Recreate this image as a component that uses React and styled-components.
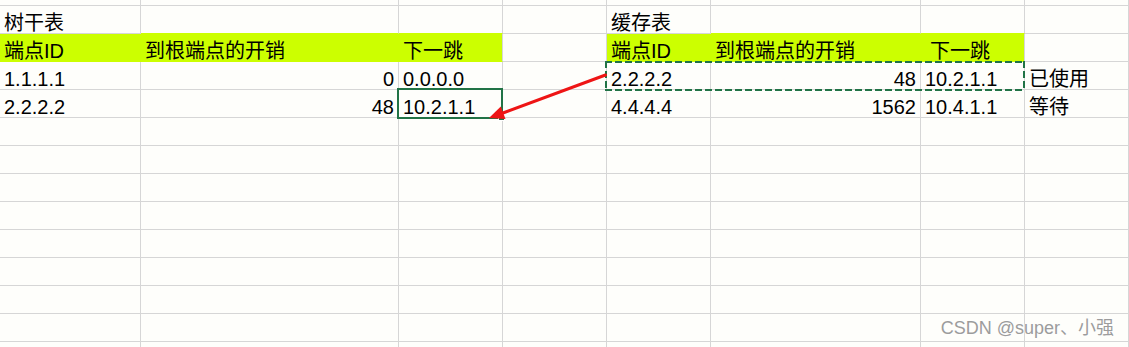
import React from 'react';
import styled, { createGlobalStyle } from 'styled-components';

const GRID = '#d6d6d6';
const LIME = '#ccff00';
const EXCEL = '#217346';
const PAPER = '#fefefb';

const GlobalStyle = createGlobalStyle`
  html, body {
    margin: 0;
    padding: 0;
    background: ${PAPER};
  }
  body {
    font-family: "Liberation Sans", "Noto Sans CJK SC", sans-serif;
  }
`;

// rows of the sheet, 8 columns each (A..H)
// a cell is text, or {t, right, fill, end, indent, above}
const rows = [
  null,
  ['树干表', { t: '', above: 1 }, { t: '', above: 1 }, '', '缓存表', { t: '', above: 1 }, { t: '', above: 1 }, ''],
  [
    { t: '端点ID', fill: 1 },
    { t: '到根端点的开销', fill: 1 },
    { t: '下一跳', fill: 1, end: 1 },
    '',
    { t: '端点ID', fill: 1 },
    { t: '到根端点的开销', fill: 1 },
    { t: '下一跳', fill: 1, end: 1, indent: 5 },
    '',
  ],
  ['1.1.1.1', { t: '0', right: 1 }, '0.0.0.0', '', '2.2.2.2', { t: '48', right: 1 }, '10.2.1.1', '已使用'],
  ['2.2.2.2', { t: '48', right: 1 }, '10.2.1.1', '', '4.4.4.4', { t: '1562', right: 1 }, '10.4.1.1', '等待'],
];

const TOTAL_ROWS = 14;

const Page = styled.div`
  position: relative;
  width: 1129px;
  height: 347px;
  overflow: hidden;
  background: ${PAPER};
`;

const Sheet = styled.div`
  display: grid;
  grid-template-columns: 141px 258px 104px 104px 104px 210px 104px 104px;
  grid-template-rows: 6px repeat(13, 28px);
`;

const Cell = styled.div`
  grid-row: ${p => p.$r};
  grid-column: ${p => p.$c};
  display: flex;
  align-items: flex-end;
  justify-content: ${p => (p.$right ? 'flex-end' : 'flex-start')};
  padding: 0 4px 0 ${p => 4 + (p.$indent || 0)}px;
  box-sizing: border-box;
  min-width: 0;
  border-right: 1px solid ${p => (p.$fill && !p.$end ? LIME : GRID)};
  border-bottom: 1px solid ${p => (p.$fill || p.$above ? LIME : GRID)};
  background: ${p => (p.$fill ? LIME : 'transparent')};
  color: #000;
  font-size: 20px;
  line-height: 20px;
  white-space: nowrap;
  overflow: hidden;
`;

const dash = dir => `repeating-linear-gradient(${dir}, ${EXCEL} 0 7px, transparent 7px 10px)`;

const CopyMarquee = styled.div`
  grid-row: 4;
  grid-column: 5 / 8;
  margin: -1px 0 -1px -2px;
  pointer-events: none;
  background:
    ${dash('90deg')} top left / 100% 2px no-repeat,
    ${dash('90deg')} bottom left / 100% 2px no-repeat,
    ${dash('180deg')} top left / 2px 100% no-repeat,
    ${dash('180deg')} top right / 2px 100% no-repeat;
`;

const Selection = styled.div`
  grid-row: 5;
  grid-column: 3;
  margin: -2px 0 -1px -2px;
  border: 2px solid ${EXCEL};
  position: relative;
  pointer-events: none;

  &::after {
    content: '';
    position: absolute;
    right: -4px;
    bottom: -4px;
    width: 5px;
    height: 5px;
    background: ${EXCEL};
    border: 1px solid #fff;
  }
`;

const ArrowLayer = styled.svg`
  position: absolute;
  left: 0;
  top: 0;
  pointer-events: none;
`;

const Watermark = styled.div`
  position: absolute;
  right: 15px;
  bottom: 9px;
  font-family: "Liberation Sans", "Noto Sans CJK SC", sans-serif;
  font-size: 18px;
  line-height: 20px;
  color: #9c9c9c;
  text-shadow: 0 0 2px #fff, 0 0 1px #fff;
  white-space: nowrap;
`;

const norm = v => (typeof v === 'string' ? { t: v } : v);

const App = () => {
  const cells = [];
  for (let r = 0; r < TOTAL_ROWS; r++) {
    const row = rows[r];
    for (let c = 0; c < 8; c++) {
      const d = row ? norm(row[c]) : { t: '' };
      cells.push(
        <Cell
          key={`${r}-${c}`}
          $r={r + 1}
          $c={c + 1}
          $right={d.right}
          $fill={d.fill}
          $end={d.end}
          $indent={d.indent}
          $above={d.above}
        >
          {d.t}
        </Cell>
      );
    }
  }

  return (
    <Page>
      <GlobalStyle />
      <Sheet>
        {cells}
        <CopyMarquee />
        <Selection />
      </Sheet>

      <ArrowLayer width="1129" height="347" viewBox="0 0 1129 347">
        <line x1="605.5" y1="75" x2="503" y2="113" stroke="#ee1515" strokeWidth="3" strokeLinecap="round" />
        <polygon points="489,118 505.5,119 500.8,106.5" fill="#ee1515" />
      </ArrowLayer>

      <Watermark>CSDN @super、小强</Watermark>
    </Page>
  );
};

export default App;
